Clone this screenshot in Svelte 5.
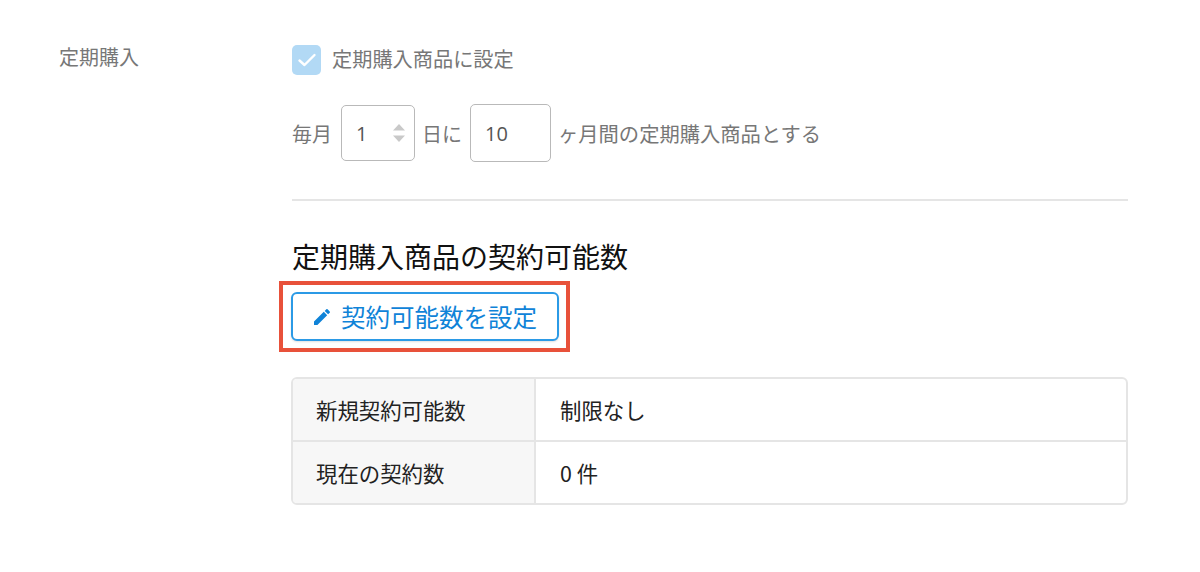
<script>
  const rows = [
    { head: '新規契約可能数', value: '制限なし' },
    { head: '現在の契約数', value: '0 件' }
  ];
</script>

<div class="page">
  <div class="side">定期購入</div>
  <div class="main">
    <label class="check">
      <span class="box">
        <svg width="20" height="16" viewBox="0 0 20 16"><path d="M2.5 8.5 L7.5 13 L17.5 3" fill="none" stroke="#fff" stroke-width="2.4" stroke-linecap="round" stroke-linejoin="round"/></svg>
      </span>
      <span class="check-text">定期購入商品に設定</span>
    </label>
    <div class="period">
      <span>毎月</span>
      <div class="field day">
        <span>1</span>
        <svg width="12" height="18" viewBox="0 0 12 18"><path d="M6 0 L12 6.5 H0 Z" fill="#c9c9c9"/><path d="M0 11.5 H12 L6 18 Z" fill="#c9c9c9"/></svg>
      </div>
      <span>日に</span>
      <div class="field months"><span>10</span></div>
      <span class="tail">ヶ月間の定期購入商品とする</span>
    </div>
    <hr />
    <h2>定期購入商品の契約可能数</h2>
    <div class="highlight">
      <button type="button">
        <svg width="18" height="18" viewBox="0 0 18 18"><path d="M1 13.6 V17 H4.4 L14.2 7.2 L10.8 3.8 Z M16.7 4.7 a0.9 0.9 0 0 0 0 -1.3 L14.6 1.3 a0.9 0.9 0 0 0 -1.3 0 L11.7 2.9 L15.1 6.3 Z" fill="#0f83d8"/></svg>
        <span>契約可能数を設定</span>
      </button>
    </div>
    <div class="table">
      {#each rows as row}
        <div class="row">
          <div class="head">{row.head}</div>
          <div class="cell">{row.value}</div>
        </div>
      {/each}
    </div>
  </div>
</div>

<style>
  :global(body) {
    margin: 0;
    background: #fff;
  }
  .page {
    display: flex;
    height: 572px;
    box-sizing: border-box;
    padding: 45px 72px 0 59px;
    font-family: "Noto Sans CJK JP", "Open Sans", sans-serif;
  }
  .side {
    width: 233px;
    flex: none;
    font-size: 20px;
    line-height: 24px;
    color: #777;
  }
  .main {
    flex: 1;
    min-width: 0;
    display: flex;
    flex-direction: column;
    align-items: flex-start;
  }
  .check {
    display: flex;
    align-items: center;
    gap: 11px;
    font-size: 20.2px;
    line-height: 28px;
    color: #777;
    height: 30px;
  }
  .check-text {
    margin-bottom: 2px;
  }
  .box {
    width: 29px;
    height: 30px;
    border-radius: 5px;
    background: #b2d9f5;
    display: flex;
    align-items: center;
    justify-content: center;
  }
  .period {
    display: flex;
    align-items: center;
    margin-top: 29px;
    font-size: 20px;
    color: #777;
    height: 58px;
  }
  .tail {
    font-size: 20.3px;
  }
  .field {
    box-sizing: border-box;
    height: 58px;
    border: 1px solid #b9b9b9;
    border-radius: 5px;
    display: flex;
    align-items: center;
    justify-content: space-between;
    font-family: "Open Sans", sans-serif;
    font-size: 20px;
    color: #555;
    padding: 0 9px 0 14px;
  }
  .day {
    width: 74px;
    height: 56px;
    margin: 0 7px 0 9px;
  }
  .months {
    width: 81px;
    margin: 0 7px 0 8px;
  }
  hr {
    width: 100%;
    border: 0;
    border-top: 2px solid #e5e5e5;
    margin: 37px 0 0;
  }
  h2 {
    margin: 35px 0 0;
    font-size: 28px;
    line-height: 40px;
    font-weight: 400;
    color: #111;
  }
  .highlight {
    margin: 5px 0 0 -13px;
    border: 4px solid #e8513a;
    padding: 7px 7px 7px 8px;
  }
  button {
    box-sizing: border-box;
    display: flex;
    align-items: center;
    gap: 10px;
    width: 268px;
    height: 49px;
    padding: 0 0 0 20px;
    border: 2px solid #2b9ae6;
    border-radius: 6px;
    background: #fff;
    color: #0f83d8;
    font: inherit;
    font-size: 24.5px;
    white-space: nowrap;
    box-shadow: 0 1px 2px rgba(0,0,0,.12);
  }
  .table {
    align-self: stretch;
    margin: 25px 0 0 -1px;
    box-sizing: border-box;
    border: 2px solid #e5e5e5;
    border-radius: 6px;
    overflow: hidden;
    color: #222;
  }
  .row {
    display: flex;
    height: 61px;
    font-size: 21.4px;
  }
  .row + .row {
    border-top: 2px solid #e5e5e5;
  }
  .head {
    width: 243px;
    box-sizing: border-box;
    padding-left: 23px;
    background: #f7f7f7;
    border-right: 2px solid #e5e5e5;
    display: flex;
    align-items: center;
  }
  .cell {
    padding-left: 24px;
    display: flex;
    align-items: center;
  }
</style>
